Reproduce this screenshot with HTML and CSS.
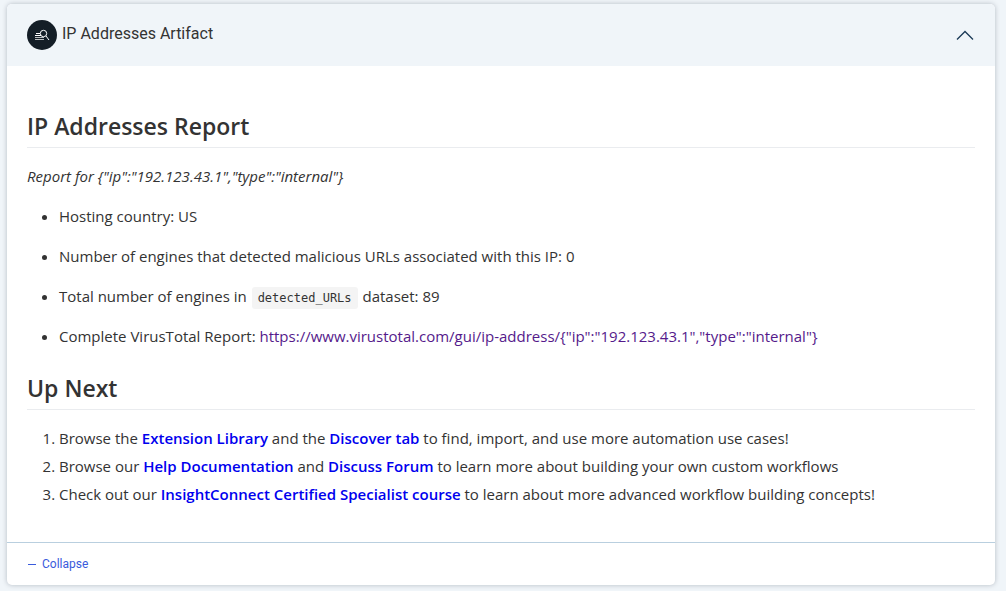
FILE: index.html
```html
<!DOCTYPE html>
<html lang="en">
<head>
<meta charset="utf-8">
<title>IP Addresses Artifact</title>
<link rel="stylesheet" href="styles.css">
</head>
<body>
<article class="card">
  <header class="card-header">
    <span class="badge">
      <svg viewBox="0 0 30 30" width="30" height="30" fill="none" stroke="#fff" aria-hidden="true">
        <path d="M9 13.500h4M8 15.500h6"/>
        <path d="M8 17.500h9M8 19.500h9" stroke-opacity="0.7"/>
        <circle cx="16.500" cy="13.500" r="3.200"/>
        <path d="M19 16l3 4"/>
      </svg>
    </span>
    <span class="card-title">IP Addresses Artifact</span>
    <button class="toggle" type="button" aria-label="Collapse artifact">
      <svg viewBox="0 0 20 12" width="20" height="12" fill="none" stroke="#1b3a57" stroke-width="1.300" aria-hidden="true"><path d="M2 10.500l8-8 8 8"/></svg>
    </button>
  </header>
  <div class="card-body">
    <h1 class="heading">IP Addresses Report</h1>
    <p class="summary"><em>Report for {"ip":"192.123.43.1","type":"internal"}</em></p>
    <ul class="facts">
      <li>Hosting country: US</li>
      <li>Number of engines that detected malicious URLs associated with this IP: 0</li>
      <li>Total number of engines in <code class="code">detected_URLs</code> dataset: 89</li>
      <li>Complete VirusTotal Report: <a class="report-link" href="#">https://www.virustotal.com/gui/ip-address/{"ip":"192.123.43.1","type":"internal"}</a></li>
    </ul>
    <h1 class="heading">Up Next</h1>
    <ol class="steps">
      <li>Browse the <a class="strong-link" href="#">Extension Library</a> and the <a class="strong-link" href="#">Discover tab</a> to find, import, and use more automation use cases!</li>
      <li>Browse our <a class="strong-link" href="#">Help Documentation</a> and <a class="strong-link" href="#">Discuss Forum</a> to learn more about building your own custom workflows</li>
      <li>Check out our <a class="strong-link" href="#">InsightConnect Certified Specialist course</a> to learn about more advanced workflow building concepts!</li>
    </ol>
  </div>
  <footer class="card-footer">
    <button class="collapse" type="button"><span class="dash"></span>Collapse</button>
  </footer>
</article>
</body>
</html>
```
FILE: styles.css
```css
* { box-sizing: border-box; }
body { margin: 0; padding: 4px 11px 6px 7px; background: #f0f5f9; font-family: "Open Sans", "Noto Sans", sans-serif; font-size: 15px; line-height: 24px; color: #333; }
.card { background: #fff; border-radius: 5px; box-shadow: 0 0 5px rgba(0, 20, 40, 0.25); overflow: hidden; }
.card-header { display: flex; align-items: center; padding: 16px 20px; background: #f0f5f9; }
.badge { display: flex; width: 30px; height: 30px; border-radius: 50%; background: #141e27; }
.card-title { flex: 1; padding: 0 0 2px 5px; font: 16px/24px Roboto, sans-serif; }
.toggle { display: flex; padding: 0; border: 0; background: none; cursor: pointer; }
.card-body { padding: 45px 20px 36px; }
.heading { margin: 0 0 16px; padding-bottom: 5px; border-bottom: 1px solid #eaecef; font-size: 23px; font-weight: 600; line-height: 31px; }
.summary { margin: 0 0 16px; }
.facts, .steps { margin: 0; padding-left: 32px; }
.facts { margin-bottom: 25px; }
.facts li + li { margin-top: 16px; }
.steps li + li { margin-top: 4px; }
.code { margin: 0 1px; padding: 4px 6px; border-radius: 3px; background: #f4f4f4; font: 12px/20px "DejaVu Sans Mono", monospace; }
.report-link { color: #551a8b; text-decoration: none; }
.strong-link { color: #0000ee; font-weight: 600; text-decoration: none; }
.card-footer { padding: 10px 20px; border-top: 1px solid #b9cfdf; }
.collapse { display: flex; align-items: center; gap: 6px; padding: 0 0 0 1px; border: 0; background: none; color: #3a5bdc; font: 12px/22px Roboto, sans-serif; cursor: pointer; }
.dash { width: 8px; height: 1px; background: currentColor; }
```
